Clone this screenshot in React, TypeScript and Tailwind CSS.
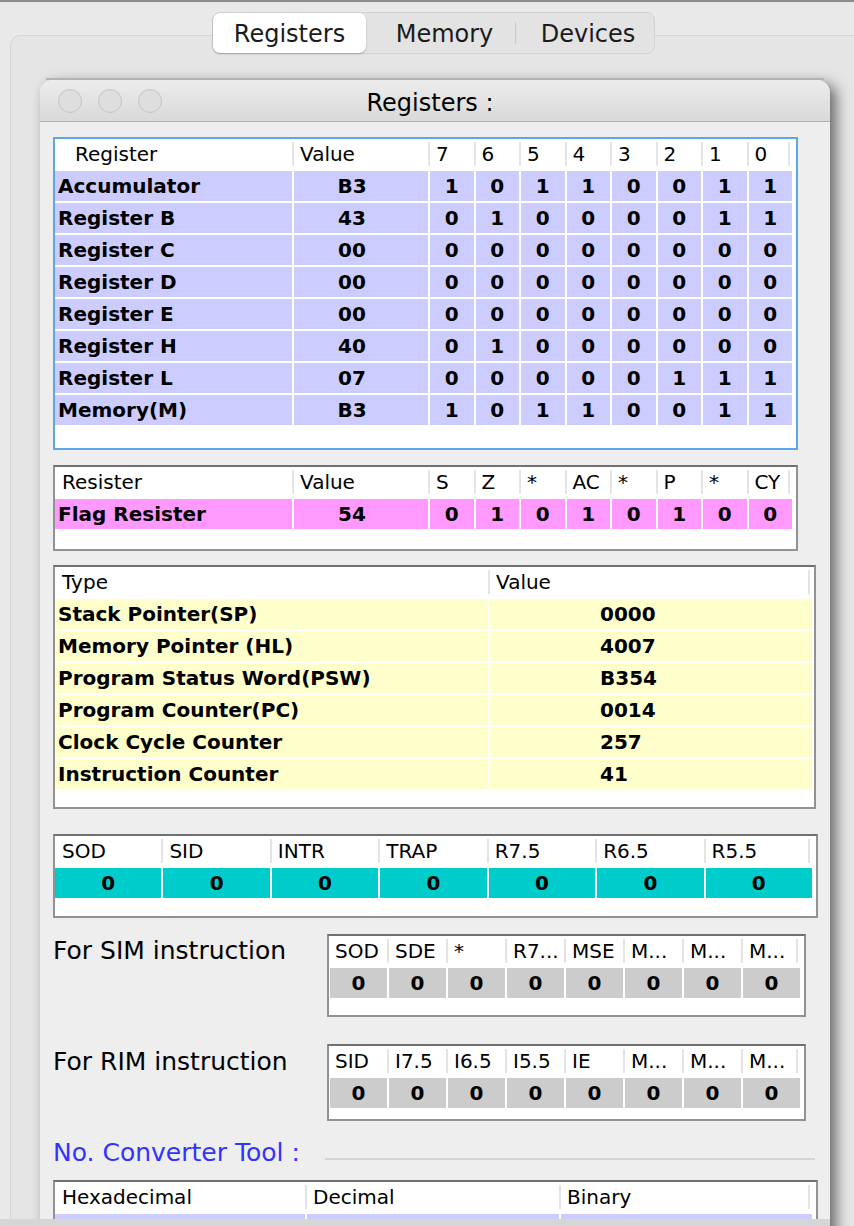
import React from 'react';

type TableProps = {
  box: string;
  cols: string;
  pad: string;
  headers: string[];
  rows: string[][];
  fill: string;
  align: string[];
  firstHead?: string;
  focus?: boolean;
};

const Table: React.FC<TableProps> = ({ box, cols, pad, headers, rows, fill, align, firstHead = 'pl-[7px]', focus }) => {
  const last = headers.length - 1;
  return (
    <div
      className={`${box} bg-white border-2 shrink-0 ${
        focus ? 'border-[#5fa6e9]' : 'border-[#929292] border-t-[#707070]'
      }`}
    >
      <div className={`grid ${cols} ${pad} gap-x-[2px] gap-y-[2px]`}>
        {headers.map((h, i) => (
          <div key={'h' + i} className="h-[30px] flex items-center min-w-0">
            <div
              className={`h-[24px] flex items-center w-full whitespace-nowrap overflow-hidden ${
                i > 0 ? '-ml-[2px] border-l-2 border-[#e4e4e4] pl-[6px]' : firstHead
              } ${i === last ? 'border-r-2 border-r-[#e4e4e4]' : ''}`}
            >
              {h}
            </div>
          </div>
        ))}
        {rows.map((r, ri) =>
          r.map((c, ci) => (
            <div
              key={ri + '-' + ci}
              className={`h-[30px] flex items-center font-bold whitespace-nowrap ${fill} ${align[ci]}`}
            >
              {c}
            </div>
          ))
        )}
      </div>
    </div>
  );
};

const bits = (hex: string) =>
  parseInt(hex, 16).toString(2).padStart(8, '0').split('');

const registers: [string, string][] = [
  ['Accumulator', 'B3'],
  ['Register B', '43'],
  ['Register C', '00'],
  ['Register D', '00'],
  ['Register E', '00'],
  ['Register H', '40'],
  ['Register L', '07'],
  ['Memory(M)', 'B3'],
];

const pointers: [string, string][] = [
  ['Stack Pointer(SP)', '0000'],
  ['Memory Pointer (HL)', '4007'],
  ['Program Status Word(PSW)', 'B354'],
  ['Program Counter(PC)', '0014'],
  ['Clock Cycle Counter', '257'],
  ['Instruction Counter', '41'],
];

const regAlign = ['pl-[3px]', 'justify-center pr-[18px]', ...Array(8).fill('justify-center')];
const center8 = Array(8).fill('justify-center');

export default function App() {
  return (
    <div className="relative w-[854px] h-[1226px] overflow-hidden bg-[#e9e9e9] text-black font-['DejaVu_Sans',sans-serif] flex flex-col">
      <div className="h-[2px] bg-[#8c8c8c] shrink-0" />

      {/* segmented tabs */}
      <div className="relative z-10 ml-[212px] mt-[10px] w-[443px] h-[42px] shrink-0 rounded-[8px] border border-[#d2d2d2] bg-[#e3e3e3] flex items-center text-[24px] text-[#1b1b1b]">
        <div className="w-[153px] h-[40px] pt-[2px] rounded-[7px] bg-white shadow-[0_1px_2px_rgba(0,0,0,0.25)] flex items-center justify-center">
          Registers
        </div>
        <div className="w-[149px] pt-[2px] flex items-center justify-center pl-[8px]">Memory</div>
        <div className="w-px h-[22px] bg-[#c9c9c9]" />
        <div className="flex-1 pt-[2px] flex items-center justify-center pl-[6px]">Devices</div>
      </div>

      {/* outer tab panel */}
      <div className="-mt-[19px] ml-[10px] flex-1 rounded-tl-[10px] border-l border-t border-[#d6d6d6] bg-[#e5e5e5] pt-[42px] pl-[29px]">
        <div className="w-[790px]">
          <div className="relative z-10 mx-[6px] h-[2px] bg-[#b3b3b3]" />

          <div className="rounded-t-[13px] bg-[#eeeeee] shadow-[6px_4px_14px_rgba(0,0,0,0.55)]">
            <div className="h-[42px] rounded-t-[13px] border-b border-[#b2b2b2] bg-gradient-to-b from-[#ededed] to-[#d9d9d9] grid grid-cols-[1fr_auto_1fr] items-center">
              <div className="flex gap-[16px] pl-[18px]">
                <span className="w-[24px] h-[24px] rounded-full bg-[#dedede] border border-[#c3c3c3]" />
                <span className="w-[24px] h-[24px] rounded-full bg-[#dedede] border border-[#c3c3c3]" />
                <span className="w-[24px] h-[24px] rounded-full bg-[#dedede] border border-[#c3c3c3]" />
              </div>
              <div className="text-[24px] pr-[10px] pt-[4px]">Registers :</div>
              <div />
            </div>

            <div className="px-[13px] pt-[15px] pb-[40px] flex flex-col text-[20px]">
              <Table
                box="w-[745px] h-[313px]"
                focus
                cols="grid-cols-[237px_134px_repeat(8,minmax(0,1fr))]"
                pad="pr-[4px]"
                headers={['Register', 'Value', '7', '6', '5', '4', '3', '2', '1', '0']}
                rows={registers.map(([n, v]) => [n, v, ...bits(v)])}
                fill="bg-[#ccccff]"
                align={regAlign}
                firstHead="pl-[20px]"
              />

              <div className="mt-[15px]">
                <Table
                  box="w-[745px] h-[86px]"
                  cols="grid-cols-[237px_134px_repeat(8,minmax(0,1fr))]"
                  pad="pr-[4px]"
                  headers={['Resister', 'Value', 'S', 'Z', '*', 'AC', '*', 'P', '*', 'CY']}
                  rows={[['Flag Resister', '54', ...bits('54')]]}
                  fill="bg-[#ff99ff]"
                  align={regAlign}
                />
              </div>

              <div className="mt-[14px]">
                <Table
                  box="w-[763px] h-[244px]"
                  cols="grid-cols-[433px_minmax(0,1fr)]"
                  pad="pr-[2px]"
                  headers={['Type', 'Value']}
                  rows={pointers.map(([n, v]) => [n, v])}
                  fill="bg-[#ffffcc]"
                  align={['pl-[3px]', 'pl-[110px]']}
                />
              </div>

              <div className="mt-[25px]">
                <Table
                  box="w-[765px] h-[84px]"
                  cols="grid-cols-[repeat(7,minmax(0,1fr))]"
                  pad="pr-[4px]"
                  headers={['SOD', 'SID', 'INTR', 'TRAP', 'R7.5', 'R6.5', 'R5.5']}
                  rows={[['0', '0', '0', '0', '0', '0', '0']]}
                  fill="bg-[#00cccc]"
                  align={Array(7).fill('justify-center')}
                />
              </div>

              <div className="mt-[16px] flex items-start">
                <div className="w-[274px] mt-[2px] leading-[30px] text-[25px]">For SIM instruction</div>
                <Table
                  box="w-[479px] h-[83px]"
                  cols="grid-cols-[repeat(8,minmax(0,1fr))]"
                  pad="pl-[1px] pr-[4px]"
                  headers={['SOD', 'SDE', '*', 'R7...', 'MSE', 'M...', 'M...', 'M...']}
                  rows={[Array(8).fill('0')]}
                  fill="bg-[#cccccc]"
                  align={center8}
                  firstHead="pl-[5px]"
                />
              </div>

              <div className="mt-[27px] flex items-start">
                <div className="w-[274px] mt-[3px] leading-[30px] text-[25px]">For RIM instruction</div>
                <Table
                  box="w-[479px] h-[77px]"
                  cols="grid-cols-[repeat(8,minmax(0,1fr))]"
                  pad="pl-[1px] pr-[4px]"
                  headers={['SID', 'I7.5', 'I6.5', 'I5.5', 'IE', 'M...', 'M...', 'M...']}
                  rows={[Array(8).fill('0')]}
                  fill="bg-[#cccccc]"
                  align={center8}
                  firstHead="pl-[5px]"
                />
              </div>

              <div className="mt-[17px] h-[30px] flex items-center">
                <div className="w-[252px] text-[25px] text-[#3333ff] whitespace-nowrap">No. Converter Tool :</div>
                <div className="ml-[20px] mt-[12px] w-[490px] h-[2px] bg-[#d4d4d4]" />
              </div>

              <div className="mt-[12px]">
                <Table
                  box="w-[765px] h-[160px]"
                  cols="grid-cols-[250px_252px_minmax(0,1fr)]"
                  pad="pr-[4px]"
                  headers={['Hexadecimal', 'Decimal', 'Binary']}
                  rows={[['', '', '']]}
                  fill="bg-[#ccccff]"
                  align={['', '', '']}
                />
              </div>
            </div>
          </div>
        </div>
      </div>

      <div className="absolute left-0 bottom-0 w-[830px] h-[7px] bg-[#d6d6d6]" />
    </div>
  );
}
